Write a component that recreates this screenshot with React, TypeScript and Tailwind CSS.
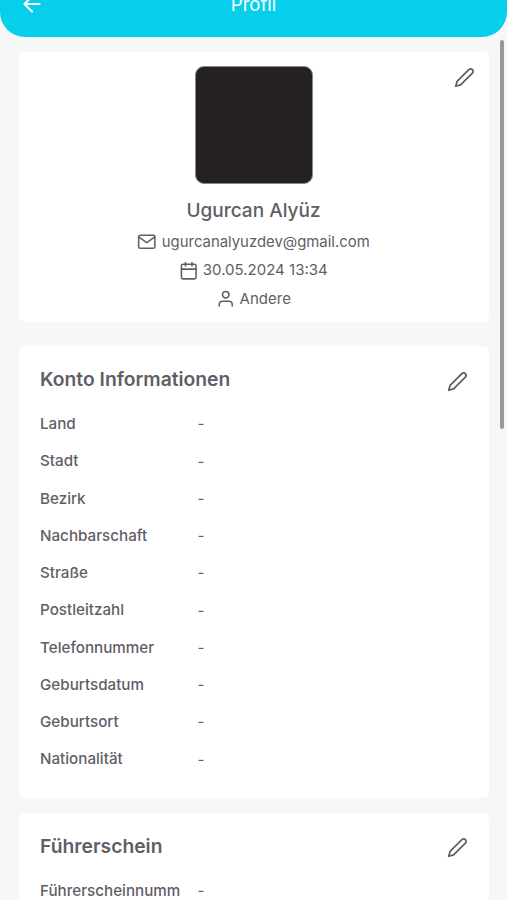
import type { ReactNode } from "react";

function Icon({ size, width = 1.9, children }: { size: number; width?: number; children: ReactNode }) {
  return (
    <svg
      width={size}
      height={size}
      viewBox="0 0 24 24"
      fill="none"
      stroke="currentColor"
      strokeWidth={width}
      strokeLinecap="round"
      strokeLinejoin="round"
      className="block shrink-0"
    >
      {children}
    </svg>
  );
}

function EditIcon() {
  return (
    <Icon size={21} width={2}>
      <path d="M17 3a2.828 2.828 0 1 1 4 4L7.5 20.5 2 22l1.5-5.5L17 3z" />
    </Icon>
  );
}

function Section({ title, rows }: { title: string; rows: string[] }) {
  return (
    <section className="rounded-md bg-white pl-[21.5px] pr-[21px] pt-[15px] pb-[19px]">
      <div className="flex h-[45px] items-start justify-between">
        <h2 className="text-[19.3px] font-semibold leading-9">{title}</h2>
        <div className="pt-[9.5px]">
          <EditIcon />
        </div>
      </div>
      {rows.map((row) => (
        <div key={row} className="flex h-[37.25px] items-center text-[15px]">
          <span className="w-[157.5px] text-[15.2px] font-medium">{row}</span>
          <span>-</span>
        </div>
      ))}
    </section>
  );
}

export default function App() {
  return (
    <div className="relative h-[900px] w-full overflow-hidden bg-[#f7f7f7] font-['Inter',sans-serif] text-[#5f5e66]">
      <header className="flex h-[36.5px] justify-center rounded-b-[25px] bg-[#05cfea] text-white">
        <div className="-mt-[9px] w-0 flex-1 pl-[18.5px]">
          <Icon size={26}>
            <path d="M19 12H5M12 19l-7-7 7-7" />
          </Icon>
        </div>
        <h1 className="-mt-[9px] shrink-0 text-[18.5px] leading-[26px]">Profil</h1>
        <div className="w-0 flex-1 pl-[18.5px]" />
      </header>

      <main className="px-[18.5px] pt-[15.5px]">
        <section className="relative flex h-[270px] flex-col items-center rounded-md bg-white pt-[14px]">
          <div className="absolute right-[14px] top-[14.5px]">
            <EditIcon />
          </div>
          <div className="h-[118px] w-[118px] rounded-[9px] border border-[#8b898a] bg-[#252122]" />
          <h2 className="mt-3 text-[19px] font-medium leading-[30px]">Ugurcan Alyüz</h2>
          <div className="mt-px flex h-[29px] items-center gap-[5px] text-[14.9px]">
            <Icon size={19.5}>
              <path d="M4 4h16c1.1 0 2 .9 2 2v12c0 1.1-.9 2-2 2H4c-1.1 0-2-.9-2-2V6c0-1.1.9-2 2-2z" />
              <path d="M22 6l-10 7L2 6" />
            </Icon>
            <span className="pt-px">ugurcanalyuzdev@gmail.com</span>
          </div>
          <div className="flex h-[28.5px] items-center gap-1 text-[15px]">
            <Icon size={19.5}>
              <rect x="3" y="4" width="18" height="18" rx="2" />
              <path d="M16 2v4M8 2v4M3 10h18" />
            </Icon>
            <span>30.05.2024 13:34</span>
          </div>
          <div className="flex h-[28.5px] items-center gap-1 text-[15px]">
            <Icon size={19.5}>
              <path d="M20 21v-2a4 4 0 0 0-4-4H8a4 4 0 0 0-4 4v2" />
              <circle cx="12" cy="7" r="4" />
            </Icon>
            <span>Andere</span>
          </div>
        </section>

        <div className="mt-6">
          <Section
            title="Konto Informationen"
            rows={[
              "Land",
              "Stadt",
              "Bezirk",
              "Nachbarschaft",
              "Straße",
              "Postleitzahl",
              "Telefonnummer",
              "Geburtsdatum",
              "Geburtsort",
              "Nationalität",
            ]}
          />
        </div>
        <div className="mt-[15px]">
          <Section title="Führerschein" rows={["Führerscheinnumm"]} />
        </div>
      </main>

      <div className="absolute right-[3px] top-10 h-[389px] w-[4px] rounded-full bg-[#999999]" />
    </div>
  );
}
